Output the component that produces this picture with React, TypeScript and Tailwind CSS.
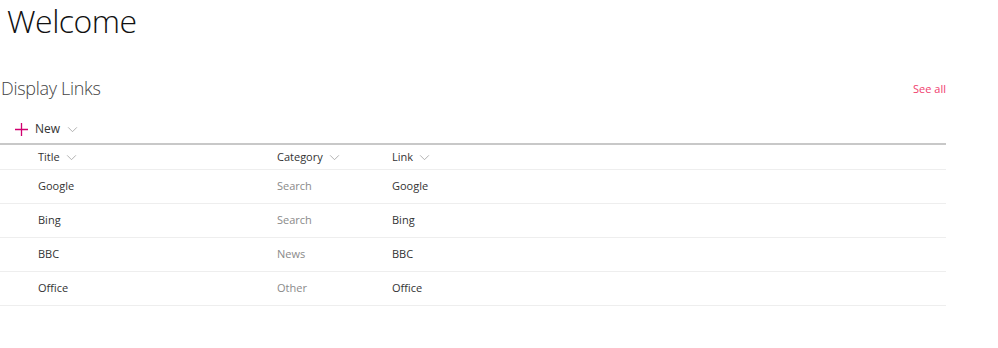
import React from 'react';

const font = { fontFamily: '"Open Sans", "Noto Sans", "Liberation Sans", sans-serif' };

const Chevron = ({ className = '' }: { className?: string }) => (
  <svg viewBox="0 0 12 8" className={className} fill="none" stroke="currentColor" strokeWidth="1">
    <path d="M1 1.5 L6 6.5 L11 1.5" />
  </svg>
);

const rows = [
  { title: 'Google', category: 'Search', link: 'Google' },
  { title: 'Bing', category: 'Search', link: 'Bing' },
  { title: 'BBC', category: 'News', link: 'BBC' },
  { title: 'Office', category: 'Other', link: 'Office' },
];

const HeaderCell = ({ label, className }: { label: string; className: string }) => (
  <div className={`flex items-center gap-[6px] text-[11px] text-[#333] ${className}`}>
    <span>{label}</span>
    <Chevron className="w-[11px] h-[7px] text-[#a6a6a6]" />
  </div>
);

export default function App() {
  return (
    <div className="w-[998px] h-[348px] bg-white overflow-hidden" style={font}>
      <h1 className="pl-[7px] pt-[1px] h-[44px] text-[32px] leading-[40px] font-light text-[#111] tracking-[-0.5px]">Welcome</h1>

      <div className="w-[946px] mt-[33px] flex items-center justify-between h-[22px]">
        <h2 className="pl-[1px] text-[18px] font-light text-[#444] tracking-[-0.3px]">Display Links</h2>
        <a className="pt-[2px] text-[11px] text-[#f0406e]">See all</a>
      </div>

      <div className="w-[946px] mt-[18px]">
        <div className="flex items-center h-[24px] pl-[15px]">
          <svg viewBox="0 0 14 14" className="w-[13px] h-[13px] text-[#d1006f]" fill="none" stroke="currentColor" strokeWidth="1.4">
            <path d="M7 0 V14 M0 7 H14" />
          </svg>
          <span className="ml-[7px] text-[12px] text-[#333]">New</span>
          <Chevron className="ml-[7px] w-[11px] h-[7px] text-[#a6a6a6]" />
        </div>

        <div className="mt-[2px] border-t-2 border-[#c8c8c8] flex items-center h-[27px] border-b border-b-[#eeeeee]">
          <HeaderCell label="Title" className="ml-[38px] w-[239px]" />
          <HeaderCell label="Category" className="w-[115px]" />
          <HeaderCell label="Link" className="" />
        </div>

        {rows.map((r) => (
          <div key={r.title} className="flex items-center h-[34px] border-b border-[#eeeeee] text-[11px]">
            <div className="ml-[38px] w-[239px] text-[#333]">{r.title}</div>
            <div className="w-[115px] text-[#8a8a8a]">{r.category}</div>
            <div className="text-[#333]">{r.link}</div>
          </div>
        ))}
      </div>
    </div>
  );
}
